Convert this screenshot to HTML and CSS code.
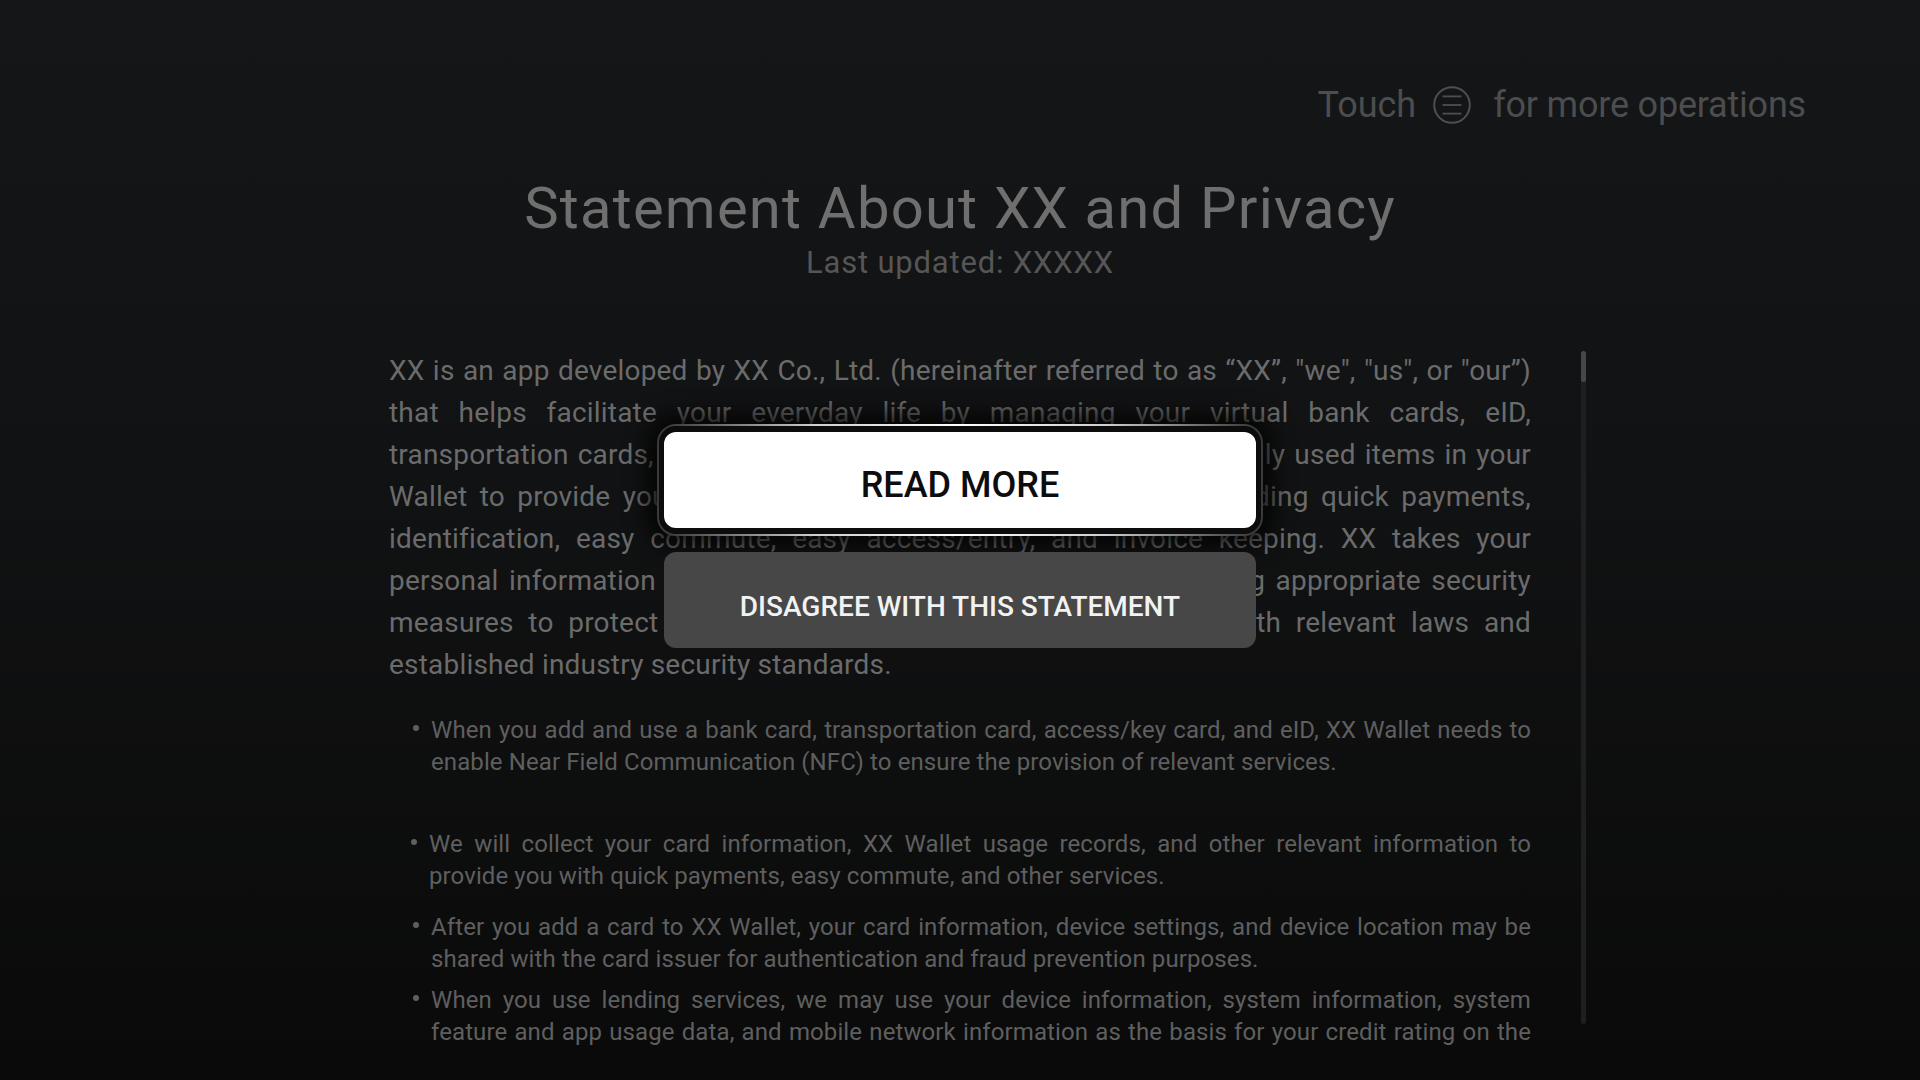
FILE: index.html
```html
<!DOCTYPE html>
<html lang="en">
<head>
<meta charset="utf-8">
<title>Statement About XX and Privacy</title>
<link rel="stylesheet" href="styles.css">
</head>
<body>
<div class="screen">
  <header class="hint">
    <span>Touch</span>
    <svg class="menu-icon" width="38" height="38" viewBox="0 0 38 38" aria-hidden="true">
      <circle cx="19" cy="19" r="17.8" fill="none" stroke="#4f4f4f" stroke-width="2"/>
      <line x1="9.5" y1="10.4" x2="28.5" y2="10.4" stroke="#4f4f4f" stroke-width="1.8"/>
      <line x1="9.5" y1="19" x2="28.5" y2="19" stroke="#4f4f4f" stroke-width="1.8"/>
      <line x1="9.5" y1="27.6" x2="28.5" y2="27.6" stroke="#4f4f4f" stroke-width="1.8"/>
    </svg>
    <span class="hint-tail">for more operations</span>
  </header>

  <div class="heading">
    <h1>Statement About XX and Privacy</h1>
    <p class="updated">Last updated: XXXXX</p>
  </div>

  <div class="scroller">
    <div class="side"></div>
    <div class="content">
      <p class="para">
        <span class="line">XX is an app developed by XX Co., Ltd. (hereinafter referred to as “XX”, "we", "us", or "our”)</span>
        <span class="line">that helps facilitate your everyday life by managing your virtual bank cards, eID,</span>
        <span class="line">transportation cards, access/key cards, car keys, and other commonly used items in your</span>
        <span class="line">Wallet to provide you with a range of services and features, including quick payments,</span>
        <span class="line">identification, easy commute, easy access/entry, and invoice keeping. XX takes your</span>
        <span class="line">personal information and privacy protection very seriously, adopting appropriate security</span>
        <span class="line">measures to protect your personal information in accordance with relevant laws and</span>
        <span class="line last">established industry security standards.</span>
      </p>
      <ul class="points">
        <li class="point">
          <span class="line">When you add and use a bank card, transportation card, access/key card, and eID, XX Wallet needs to</span>
          <span class="line last">enable Near Field Communication (NFC) to ensure the provision of relevant services.</span>
        </li>
        <li class="point gap-lg shift">
          <span class="line">We will collect your card information, XX Wallet usage records, and other relevant information to</span>
          <span class="line last">provide you with quick payments, easy commute, and other services.</span>
        </li>
        <li class="point gap-md">
          <span class="line">After you add a card to XX Wallet, your card information, device settings, and device location may be</span>
          <span class="line last">shared with the card issuer for authentication and fraud prevention purposes.</span>
        </li>
        <li class="point gap-sm">
          <span class="line">When you use lending services, we may use your device information, system information, system</span>
          <span class="line">feature and app usage data, and mobile network information as the basis for your credit rating on the</span>
        </li>
      </ul>
    </div>
    <div class="side">
      <div class="scrollbar"><div class="thumb"></div></div>
    </div>
  </div>

  <div class="actions">
    <button class="btn btn-primary" type="button">READ MORE</button>
    <button class="btn btn-secondary" type="button">DISAGREE WITH THIS STATEMENT</button>
  </div>
</div>
</body>
</html>
```

FILE: styles.css
```css
html, body {
  margin: 0;
  padding: 0;
  background: #0b0b0b;
}

.screen {
  position: relative;
  width: 1920px;
  height: 1080px;
  overflow: hidden;
  background: linear-gradient(180deg, #151618 0%, #111213 45%, #0a0a0a 100%);
  font-family: Roboto, "Noto Sans", sans-serif;
}

/* top hint */
.hint {
  display: flex;
  justify-content: flex-end;
  align-items: center;
  height: 44px;
  padding: 83px 114px 0 0;
  font-size: 36px;
  line-height: 44px;
  color: #4c4d4e;
}

.hint-tail {
  letter-spacing: -0.2px;
}

.menu-icon {
  display: block;
  margin: 0 22px 0 17px;
}

/* heading */
.heading {
  margin-top: 49px;
  text-align: center;
}

.heading h1 {
  margin: 0;
  font-size: 58px;
  line-height: 64px;
  font-weight: 400;
  letter-spacing: 1.2px;
  color: #6f6f6f;
}

.updated {
  margin: 5px 0 0;
  font-size: 31px;
  line-height: 36px;
  letter-spacing: 0.8px;
  color: #565656;
}

/* scrolling body */
.scroller {
  display: grid;
  grid-template-columns: 1fr 1142px 1fr;
  margin-top: 69px;
  height: 697px;
  overflow: hidden;
}

.line {
  display: block;
  white-space: nowrap;
  text-align: justify;
  text-align-last: justify;
}

.line.last {
  text-align-last: left;
}

.para {
  margin: 0;
  font-size: 28px;
  line-height: 42px;
  letter-spacing: 0.2px;
  color: #6b6b6b;
}

.points {
  list-style: none;
  margin: 28px 0 0;
  padding: 0;
  font-size: 24px;
  line-height: 32px;
  letter-spacing: 0.1px;
  color: #5f5f5f;
}

.point {
  position: relative;
  padding-left: 42px;
}

.point::before {
  content: "";
  position: absolute;
  left: 24px;
  top: 11px;
  width: 6px;
  height: 6px;
  border-radius: 50%;
  background: #5f5f5f;
}

.point.shift {
  padding-left: 40px;
}

.point.shift::before {
  left: 22px;
}

.gap-lg { margin-top: 50px; }
.gap-md { margin-top: 19px; }
.gap-sm { margin-top: 9px; }

.scrollbar {
  margin: 1px 0 0 50px;
  width: 5px;
  height: 673px;
  border-radius: 3px;
  background: #1f1f1f;
}

.thumb {
  height: 31px;
  border-radius: 3px;
  background: #474747;
}

/* overlay action buttons */
.actions {
  position: absolute;
  top: 432px;
  left: 50%;
  transform: translateX(-50%);
  width: 592px;
  display: flex;
  flex-direction: column;
  gap: 24px;
}

.btn {
  box-sizing: border-box;
  height: 96px;
  border: none;
  border-radius: 12px;
  padding: 0;
  font-family: Roboto, "Noto Sans", sans-serif;
  font-weight: 500;
  display: flex;
  align-items: center;
  justify-content: center;
}

.btn-primary {
  position: relative;
  padding-top: 10px;
  background: #ffffff;
  color: #0d0d0d;
  font-size: 36px;
}

.btn-primary::before {
  content: "";
  position: absolute;
  top: -8px;
  bottom: -8px;
  left: -7px;
  right: -7px;
  border: 2px solid #3a3a3a;
  border-radius: 19px;
  background: #0c0c0c;
  box-shadow: 0 0 22px 10px rgba(0, 0, 0, 0.78);
  z-index: -1;
}

.btn-primary::after {
  content: "";
  position: absolute;
  top: -8px;
  bottom: -8px;
  left: 4px;
  right: 4px;
  background:
    linear-gradient(90deg, rgba(255,255,255,0) 0%, rgba(255,255,255,0.75) 25%, #ffffff 50%, rgba(255,255,255,0.75) 75%, rgba(255,255,255,0) 100%) top / 100% 2px no-repeat,
    linear-gradient(90deg, rgba(255,255,255,0) 0%, rgba(255,255,255,0.75) 25%, #ffffff 50%, rgba(255,255,255,0.75) 75%, rgba(255,255,255,0) 100%) bottom / 100% 2px no-repeat;
  z-index: -1;
}

.btn-secondary {
  padding-top: 12px;
  background: #474747;
  color: #f2f2f2;
  font-size: 28px;
}
```
